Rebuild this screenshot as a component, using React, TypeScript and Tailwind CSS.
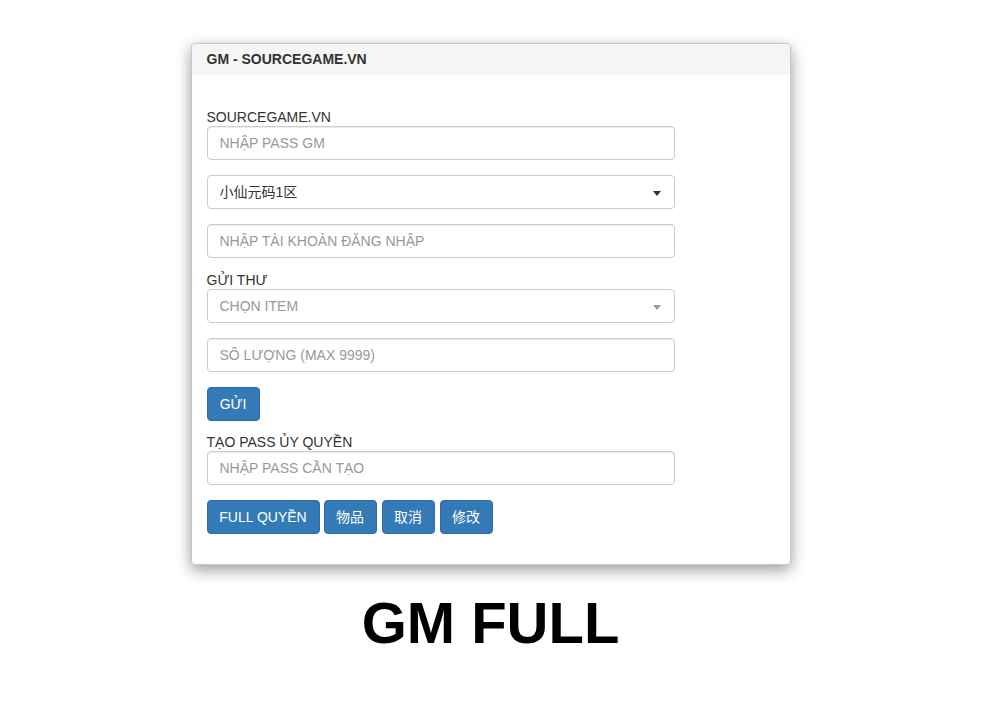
import { useState } from 'react';

const font = { fontFamily: '"Liberation Sans", Arial, "Noto Sans CJK SC", sans-serif' };

function Caret({ light }: { light?: boolean }) {
  return (
    <span
      className={`absolute right-[13px] top-[15px] w-0 h-0 border-l-[4px] border-r-[4px] border-t-[5px] border-l-transparent border-r-transparent ${light ? 'border-t-[#999]' : 'border-t-[#333]'}`}
    />
  );
}

export default function App() {
  const [passGm, setPassGm] = useState('');
  const [account, setAccount] = useState('');
  const [qty, setQty] = useState('');
  const [newPass, setNewPass] = useState('');

  const inputCls =
    'block w-[468px] h-[34px] border border-[#ccc] rounded-[4px] px-3 text-[14px] text-[#555] placeholder:text-[#999] outline-none shadow-[inset_0_1px_1px_rgba(0,0,0,0.075)]';
  const btnCls =
    'h-[34px] px-0 whitespace-nowrap bg-[#337ab7] border border-[#2e6da4] rounded-[4px] text-white text-[14px] leading-[20px]';

  return (
    <div className="w-[981px] min-h-[725px] bg-white text-[#333]" style={font}>
      <div className="pt-[43px] flex justify-center">
        <div className="w-[600px] border border-[#c8c8c8] rounded-[4px] bg-white shadow-[0_5px_15px_rgba(0,0,0,0.4)]">
          <div className="h-[31px] bg-[#f5f5f5] px-[15px] flex items-center text-[14px] font-bold text-[#333] rounded-t-[4px]">
            GM - SOURCEGAME.VN
          </div>
          <div className="px-[15px] pt-[31px] pb-[30px]">
            <label className="block h-[20px] leading-[22px] text-[14px]">SOURCEGAME.VN</label>
            <input value={passGm} onChange={e => setPassGm(e.target.value)} placeholder="NHẬP PASS GM" className={inputCls} />

            <div className="relative w-[468px] h-[34px] mt-[15px] border border-[#ccc] rounded-[4px] px-3 flex items-center text-[14px] text-[#333]">
              小仙元码1区
              <Caret />
            </div>

            <input value={account} onChange={e => setAccount(e.target.value)} placeholder="NHẬP TÀI KHOẢN ĐĂNG NHẬP" className={`${inputCls} mt-[15px]`} />

            <label className="block h-[20px] leading-[22px] text-[14px] mt-[11px]">GỬI THƯ</label>
            <div className="relative w-[468px] h-[34px] border border-[#ccc] rounded-[4px] px-3 flex items-center text-[14px] text-[#999]">
              CHỌN ITEM
              <Caret light />
            </div>

            <input value={qty} onChange={e => setQty(e.target.value)} placeholder="SỐ LƯỢNG (MAX 9999)" className={`${inputCls} mt-[15px]`} />

            <button className={`${btnCls} mt-[15px] w-[53px]`}>GỬI</button>

            <label className="block h-[20px] leading-[22px] text-[14px] mt-[10px]">TẠO PASS ỦY QUYỀN</label>
            <input value={newPass} onChange={e => setNewPass(e.target.value)} placeholder="NHẬP PASS CẦN TẠO" className={inputCls} />

            <div className="flex gap-[5px] mt-[15px]">
              <button className={`${btnCls} w-[113px] mr-[-1px]`}>FULL QUYỀN</button>
              <button className={`${btnCls} w-[53px]`}>物品</button>
              <button className={`${btnCls} w-[53px]`}>取消</button>
              <button className={`${btnCls} w-[53px]`}>修改</button>
            </div>
          </div>
        </div>
      </div>
      <h1 className="text-center text-[58px] font-bold leading-[70px] mt-[23px] text-black">GM FULL</h1>
    </div>
  );
}
